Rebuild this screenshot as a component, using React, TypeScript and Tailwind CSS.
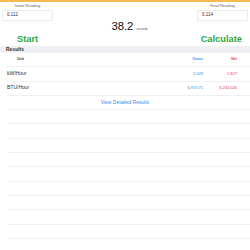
import React from 'react';

const rows = [
  { unit: 'kW/Hour', gross: '2.028', net: '1.827' },
  { unit: 'BTU/Hour', gross: '6,919.75', net: '6,234.026' },
];

function Reading({ label, value }: { label: string; value: string }) {
  return (
    <div className="w-[51px] flex flex-col items-center">
      <span className="text-[4px] leading-[4px] text-[#666]">{label}</span>
      <div className="mt-[2px] w-full h-[11px] border border-[#ebebeb] rounded-[1px] flex items-center pl-[4px] text-[4.5px] text-[#333]">
        {value}
      </div>
    </div>
  );
}

export default function App() {
  return (
    <div className="w-[250px] h-[250px] overflow-hidden bg-white font-['Liberation_Sans',Arial,sans-serif]">
      <div className="h-[2px] bg-[#f6b94c]" />

      <div className="flex items-start pt-[2px] pl-[2px] pr-[2px]">
        <Reading label="Initial Reading" value="0.112" />
        <div className="flex-1 flex justify-center items-baseline pt-[17px] pl-[9px]">
          <span className="text-[11.3px] leading-[11px] text-[#111]">38.2</span>
          <span className="ml-[3px] text-[3px] leading-[3px] text-[#555]">seconds</span>
        </div>
        <Reading label="Final Reading" value="0.114" />
      </div>

      <div className="flex justify-between items-center pl-[17px] pr-[8px] h-[12px] mt-[2px] text-[9.3px] font-bold text-[#2aa845]">
        <span>Start</span>
        <span>Calculate</span>
      </div>

      <div className="h-[7px] bg-[#efeff4] flex items-center pl-[6px] text-[5px] font-bold text-[#333]">
        Results
      </div>

      <div className="flex flex-col">
        <div className="ml-[7px] h-[14.3px] border-b border-[#f0f0f0] flex items-center pr-[13px] text-[3.6px] font-bold">
          <span className="flex-1 pl-[10px] text-[#444]">Unit</span>
          <span className="w-[40px] text-right text-[#3a8ee6]">Gross</span>
          <span className="w-[34px] text-right text-[#e8383d]">Net</span>
        </div>
        {rows.map((r) => (
          <div key={r.unit} className="ml-[7px] h-[14.3px] border-b border-[#f0f0f0] flex items-center pr-[13px]">
            <span className="flex-1 text-[5px] text-[#333]">{r.unit}</span>
            <span className="w-[40px] text-right text-[4px] text-[#3a8ee6]">{r.gross}</span>
            <span className="w-[34px] text-right text-[4px] text-[#e8383d]">{r.net}</span>
          </div>
        ))}
        <div className="ml-[7px] h-[14.3px] border-b border-[#f0f0f0] flex items-center justify-center pr-[7px] text-[5px] text-[#3a8ee6]">
          View Detailed Results
        </div>
        {Array.from({ length: 10 }).map((_, i) => (
          <div key={i} className="ml-[7px] h-[14.3px] border-b border-[#f0f0f0]" />
        ))}
      </div>
    </div>
  );
}
